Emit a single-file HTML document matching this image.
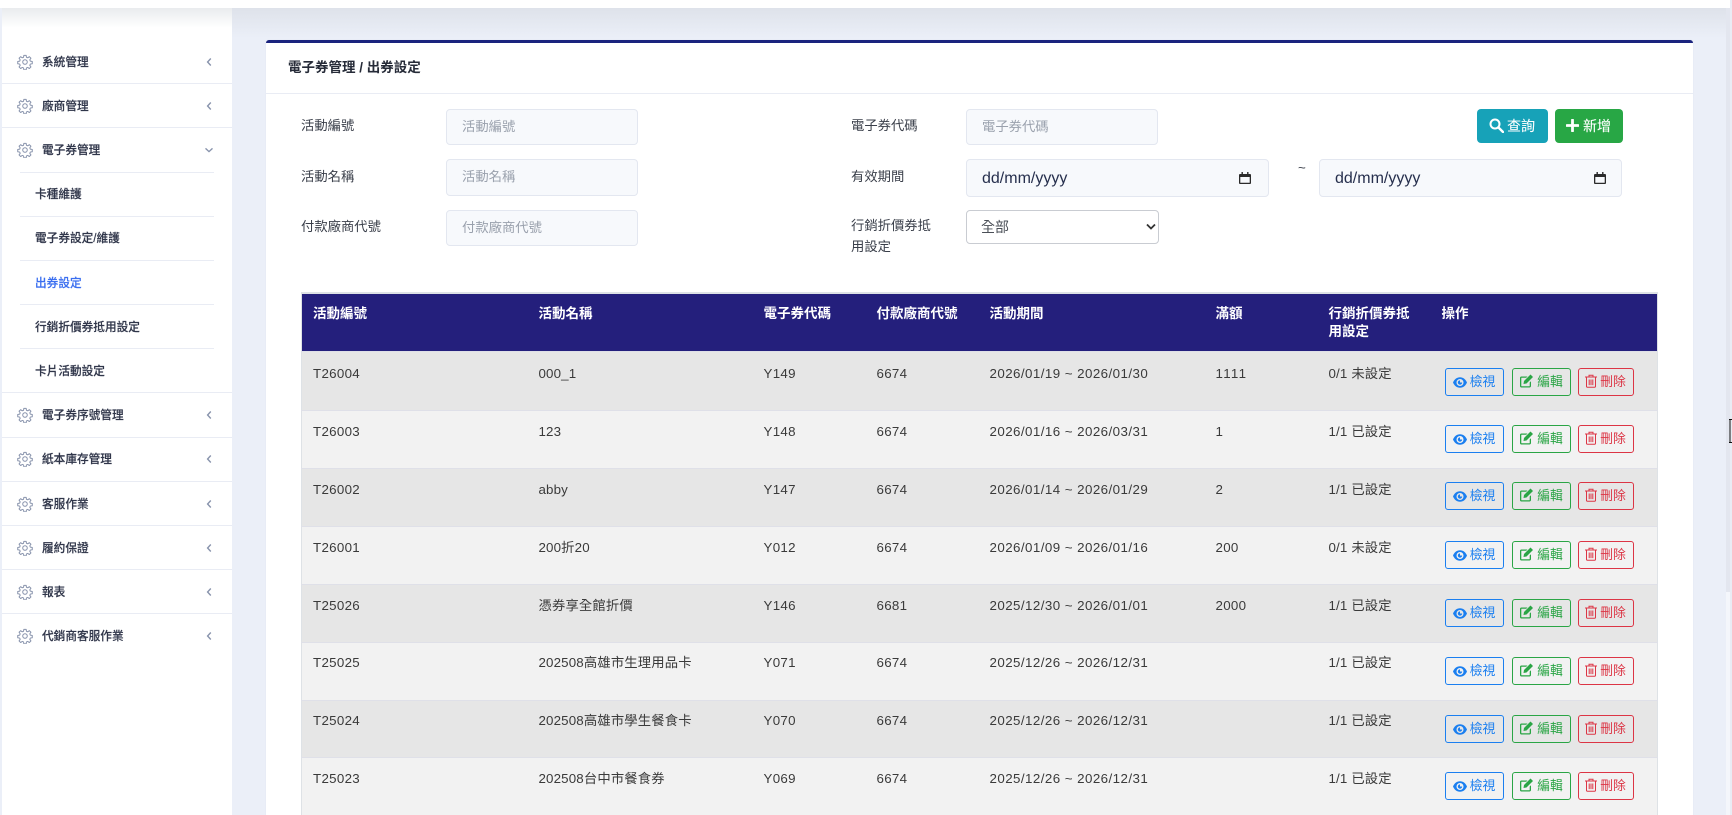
<!DOCTYPE html>
<html lang="zh-Hant"><head><meta charset="utf-8"><title>出券設定</title>
<style>
*{box-sizing:border-box}
html,body{margin:0;padding:0;width:1732px;height:815px;overflow:hidden;background:#ebeff8;font-family:"Liberation Sans","Noto Sans CJK TC",sans-serif;color:#212529}
.a{position:absolute;white-space:nowrap}
#hdr{position:absolute;left:0;top:0;width:1730px;height:8px;background:#fff;z-index:5}
#sh{position:absolute;left:232px;top:8px;width:1494px;height:30px;background:linear-gradient(#dee2ea,#ebeff8)}
#side{position:absolute;left:2px;top:0;width:230px;height:815px;background:#fff}
#sh2{position:absolute;left:2px;top:8px;width:230px;height:20px;background:linear-gradient(#e9ebee,#fff)}
.sep{position:absolute;height:1px;background:#e9ecf4}
.m{position:absolute;left:42px;margin-top:1px;font-size:11.67px;line-height:16px;font-weight:500;color:#30364a;white-space:nowrap;-webkit-text-stroke:.15px #30364a}
.s{position:absolute;left:35px;margin-top:1px;font-size:11.67px;line-height:16px;font-weight:500;color:#30364a;white-space:nowrap;-webkit-text-stroke:.15px #30364a}
.g{position:absolute;left:17px;width:16px;height:16px}
.c{position:absolute;left:204px;width:10px;height:10px}
#card{position:absolute;left:266px;top:40px;width:1427px;height:775px;background:#fff;border-top:3px solid #1a237e;border-radius:3px 3px 0 0;box-shadow:0 0 1px #d8dcea}
.t{position:absolute;font-size:13.33px;line-height:20px;color:#3a3f4a;white-space:nowrap}
.i{position:absolute;background:#f7f9fc;border:1px solid #e3e7f0;border-radius:4px;font-size:13.33px;line-height:34px;color:#9aa1ad;padding-left:15px;white-space:nowrap}
.btn{position:absolute;top:109px;height:34px;border-radius:4px;color:#fff;font-size:14px;line-height:35px;white-space:nowrap;-webkit-text-stroke:.1px #fff}
table{position:absolute;left:301px;top:292px;width:1357px;border-collapse:collapse;table-layout:fixed;font-size:13.33px;border-top:2px solid #dee2e6;border-left:1px solid #dee2e6;border-right:1px solid #dee2e6}
th{background:#241f7c;color:#fff;font-weight:700;font-size:13.5px;text-align:left;vertical-align:top;padding:11px 10px 0 11px;line-height:18px;height:58px}
th:last-child{padding-left:10px}
td{vertical-align:top;padding:10px 0 0 11px;line-height:20px;color:#3a3a3a;border-top:1px solid #dfe0e8;letter-spacing:.3px;font-kerning:none;white-space:nowrap}
tr.p td{padding-top:11px}
td:nth-child(2),td:nth-child(7){letter-spacing:.15px}
td:nth-child(5){letter-spacing:.44px}
tr.o td{background:#e6e6e6}
tr.e td{background:#f2f2f2}
td.op{padding-left:13px;letter-spacing:0}
.b{display:inline-block;height:28px;border:1px solid;border-radius:3px;font-size:12.8px;line-height:25px;vertical-align:top;white-space:nowrap;text-align:center}
.b svg{vertical-align:-2px;margin-right:3px}
.v{color:#1b7ff0;border-color:#1b7ff0;width:59px}
.d{color:#2aa545;border-color:#2aa545;width:59px;margin-left:8px}
.x{color:#dc3545;border-color:#dc3545;width:56px;margin-left:7px}
</style></head><body>
<svg width="0" height="0" style="position:absolute"><defs>
<symbol id="gear" viewBox="0 0 24 24"><g fill="none" stroke="#8893ac" stroke-width="1.5" stroke-linejoin="round"><circle cx="12" cy="12" r="3.4"/><path d="M10.3 2h3.4l.5 2.9 1.9.8 2.4-1.7 2.4 2.4-1.7 2.4.8 1.9 2.9.5v3.4l-2.9.5-.8 1.9 1.7 2.4-2.4 2.4-2.4-1.7-1.9.8-.5 2.9h-3.4l-.5-2.9-1.9-.8-2.4 1.7-2.4-2.4 1.7-2.4-.8-1.9-2.9-.5v-3.4l2.9-.5.8-1.9-1.7-2.4 2.4-2.4 2.4 1.7 1.9-.8z"/></g></symbol>
<symbol id="cl" viewBox="0 0 10 10"><path d="M6.8 1.5 3.6 5l3.2 3.5" fill="none" stroke="#8893ac" stroke-width="1.4"/></symbol>
<symbol id="cd" viewBox="0 0 10 10"><path d="M1.5 3.4 5 6.6l3.5-3.2" fill="none" stroke="#8893ac" stroke-width="1.4"/></symbol>
<symbol id="cal" viewBox="0 0 12 12"><path d="M1 2h10a1 1 0 0 1 1 1v8a1 1 0 0 1-1 1H1a1 1 0 0 1-1-1V3a1 1 0 0 1 1-1zM1.3 5v5.700h9.400V5z" fill="#2b2b2b" fill-rule="evenodd"/><path d="M2.500 0h1.400v3H2.500zM8.100 0h1.400v3H8.100z" fill="#2b2b2b"/></symbol>
<symbol id="eye" viewBox="0 0 16 12"><path d="M8 0C4.500 0 1.500 2.300 0 6c1.500 3.700 4.500 6 8 6s6.500-2.300 8-6c-1.500-3.700-4.500-6-8-6zm0 10a4 4 0 1 1 0-8 4 4 0 0 1 0 8z" fill="currentColor"/><path d="M8 3.500a2.500 2.500 0 1 0 2.500 2.500H8z" fill="currentColor"/></symbol>
<symbol id="edit" viewBox="0 0 14 14"><path d="M1.800 2.500h6.200L6.700 3.800H2.100a.3.3 0 0 0-.3.300v7.800c0 .2.100.3.300.3h7.800c.2 0 .3-.1.300-.3V8.500l1.300-1.300v4.800c0 .8-.7 1.500-1.500 1.500H1.800C1 13.500.5 12.800.5 12V4c0-.8.500-1.500 1.300-1.500z" fill="currentColor"/><path d="M11 .5l2.500 2.500-6.500 6.500-3 .5.500-3z" fill="currentColor"/></symbol>
<symbol id="tr" viewBox="0 0 12 14"><g fill="none" stroke="currentColor" stroke-width="1"><path d="M0 3h12M4 3V1.200h4V3M1.500 3v9.300c0 .5.400 1 1 1h7c.6 0 1-.5 1-1V3M4.200 5.500v5.600M6 5.500v5.600M7.800 5.500v5.600"/></g></symbol>
</defs></svg>

<div id="side"></div><div id="sh"></div><div id="sh2"></div><div id="hdr"></div>

<div class="sep" style="left:2px;top:83px;width:230px"></div>
<div class="sep" style="left:2px;top:127px;width:230px"></div>
<div class="sep" style="left:20px;top:172px;width:194px"></div>
<div class="sep" style="left:20px;top:216px;width:194px"></div>
<div class="sep" style="left:20px;top:260px;width:194px"></div>
<div class="sep" style="left:20px;top:304px;width:194px"></div>
<div class="sep" style="left:20px;top:348px;width:194px"></div>
<div class="sep" style="left:2px;top:392px;width:230px"></div>
<div class="sep" style="left:2px;top:437px;width:230px"></div>
<div class="sep" style="left:2px;top:481px;width:230px"></div>
<div class="sep" style="left:2px;top:525px;width:230px"></div>
<div class="sep" style="left:2px;top:569px;width:230px"></div>
<div class="sep" style="left:2px;top:613px;width:230px"></div>

<svg class="g" style="top:54px"><use href="#gear"/></svg><div class="m" style="top:54px">系統管理</div><svg class="c" style="top:57px"><use href="#cl"/></svg>
<svg class="g" style="top:98px"><use href="#gear"/></svg><div class="m" style="top:98px">廠商管理</div><svg class="c" style="top:101px"><use href="#cl"/></svg>
<svg class="g" style="top:142px"><use href="#gear"/></svg><div class="m" style="top:142px">電子券管理</div><svg class="c" style="top:145px"><use href="#cd"/></svg>
<div class="s" style="top:186px">卡種維護</div>
<div class="s" style="top:230px">電子券設定/維護</div>
<div class="s" style="top:275px;color:#3b6ff0;-webkit-text-stroke-color:#3b6ff0">出券設定</div>
<div class="s" style="top:319px">行銷折價券抵用設定</div>
<div class="s" style="top:363px">卡片活動設定</div>
<svg class="g" style="top:407px"><use href="#gear"/></svg><div class="m" style="top:407px">電子券序號管理</div><svg class="c" style="top:410px"><use href="#cl"/></svg>
<svg class="g" style="top:451px"><use href="#gear"/></svg><div class="m" style="top:451px">紙本庫存管理</div><svg class="c" style="top:454px"><use href="#cl"/></svg>
<svg class="g" style="top:496px"><use href="#gear"/></svg><div class="m" style="top:496px">客服作業</div><svg class="c" style="top:499px"><use href="#cl"/></svg>
<svg class="g" style="top:540px"><use href="#gear"/></svg><div class="m" style="top:540px">履約保證</div><svg class="c" style="top:543px"><use href="#cl"/></svg>
<svg class="g" style="top:584px"><use href="#gear"/></svg><div class="m" style="top:584px">報表</div><svg class="c" style="top:587px"><use href="#cl"/></svg>
<svg class="g" style="top:628px"><use href="#gear"/></svg><div class="m" style="top:628px">代銷商客服作業</div><svg class="c" style="top:631px"><use href="#cl"/></svg>

<div id="card"></div>
<div class="sep" style="left:266px;top:93px;width:1427px"></div>
<div class="a" style="left:288px;top:59px;font-size:13.5px;line-height:18px;font-weight:700;color:#262b38">電子券管理 / 出券設定</div>

<div class="t" style="left:301px;top:116px">活動編號</div>
<div class="t" style="left:301px;top:167px">活動名稱</div>
<div class="t" style="left:301px;top:217px">付款廠商代號</div>
<div class="i" style="left:446px;top:109px;width:192px;height:36px">活動編號</div>
<div class="i" style="left:446px;top:159px;width:192px;height:37px">活動名稱</div>
<div class="i" style="left:446px;top:210px;width:192px;height:36px">付款廠商代號</div>

<div class="t" style="left:851px;top:116px">電子券代碼</div>
<div class="t" style="left:851px;top:167px">有效期間</div>
<div class="t" style="left:851px;top:216px">行銷折價券抵</div>
<div class="t" style="left:851px;top:237px">用設定</div>
<div class="i" style="left:966px;top:109px;width:192px;height:36px">電子券代碼</div>
<div class="i" style="left:966px;top:159px;width:303px;height:38px;font-size:16px;color:#262f4d;line-height:37px">dd/mm/yyyy</div>
<svg class="a" style="left:1239px;top:172px" width="12" height="12"><use href="#cal"/></svg>
<div class="a" style="left:1298px;top:158px;font-size:13.33px;line-height:20px;color:#3a3f4a">~</div>
<div class="i" style="left:1319px;top:159px;width:303px;height:38px;font-size:16px;color:#262f4d;line-height:37px">dd/mm/yyyy</div>
<svg class="a" style="left:1594px;top:172px" width="12" height="12"><use href="#cal"/></svg>
<div class="a" style="left:966px;top:210px;width:193px;height:34px;background:#fff;border:1px solid #c9ccd2;border-radius:4px;font-size:14px;line-height:33px;color:#4a4f57;padding-left:14px">全部</div>
<svg class="a" style="left:1145px;top:222px" width="12" height="10" viewBox="0 0 12 10"><path d="M2 2.500 6 6.500l4-4" fill="none" stroke="#333" stroke-width="1.800"/></svg>

<div class="btn" style="left:1477px;width:71px;background:#17a2b8">
<svg class="a" style="left:12px;top:9px" width="15" height="15" viewBox="0 0 15 15"><circle cx="6" cy="6" r="4.500" fill="none" stroke="#fff" stroke-width="2"/><path d="M9.500 9.500 14 14" stroke="#fff" stroke-width="2.400" stroke-linecap="round"/></svg>
<span class="a" style="left:30px;top:0">查詢</span></div>
<div class="btn" style="left:1555px;width:68px;background:#28a745">
<svg class="a" style="left:11px;top:10px" width="13" height="13" viewBox="0 0 13 13"><path d="M6.500 1v11M1 6.500h11" stroke="#fff" stroke-width="2.800" stroke-linecap="round"/></svg>
<span class="a" style="left:28px;top:0">新增</span></div>

<table>
<colgroup><col style="width:226px"><col style="width:225px"><col style="width:113px"><col style="width:113px"><col style="width:226px"><col style="width:113px"><col style="width:114px"><col></colgroup>
<tr><th>活動編號</th><th>活動名稱</th><th>電子券代碼</th><th>付款廠商代號</th><th>活動期間</th><th>滿額</th><th>行銷折價券抵用設定</th><th>操作</th></tr>
<tr class="o" style="height:59px"><td style="padding-top:12px">T26004</td><td style="padding-top:12px">000_1</td><td style="padding-top:12px">Y149</td><td style="padding-top:12px">6674</td><td style="padding-top:12px">2026/01/19 ~ 2026/01/30</td><td style="padding-top:12px">1111</td><td style="padding-top:12px">0/1 未設定</td><td class="op" style="padding-top:16px"><span class="b v"><svg width="14" height="11"><use href="#eye"/></svg>檢視</span><span class="b d"><svg width="15" height="14"><use href="#edit"/></svg>編輯</span><span class="b x"><svg width="12" height="14"><use href="#tr"/></svg>刪除</span></td></tr>
<tr class="e p" style="height:58px"><td>T26003</td><td>123</td><td>Y148</td><td>6674</td><td>2026/01/16 ~ 2026/03/31</td><td>1</td><td>1/1 已設定</td><td class="op" style="padding-top:14px"><span class="b v"><svg width="14" height="11"><use href="#eye"/></svg>檢視</span><span class="b d"><svg width="15" height="14"><use href="#edit"/></svg>編輯</span><span class="b x"><svg width="12" height="14"><use href="#tr"/></svg>刪除</span></td></tr>
<tr class="o p" style="height:58px"><td>T26002</td><td>abby</td><td>Y147</td><td>6674</td><td>2026/01/14 ~ 2026/01/29</td><td>2</td><td>1/1 已設定</td><td class="op" style="padding-top:13px"><span class="b v"><svg width="14" height="11"><use href="#eye"/></svg>檢視</span><span class="b d"><svg width="15" height="14"><use href="#edit"/></svg>編輯</span><span class="b x"><svg width="12" height="14"><use href="#tr"/></svg>刪除</span></td></tr>
<tr class="e p" style="height:58px"><td>T26001</td><td>200折20</td><td>Y012</td><td>6674</td><td>2026/01/09 ~ 2026/01/16</td><td>200</td><td>0/1 未設定</td><td class="op" style="padding-top:14px"><span class="b v"><svg width="14" height="11"><use href="#eye"/></svg>檢視</span><span class="b d"><svg width="15" height="14"><use href="#edit"/></svg>編輯</span><span class="b x"><svg width="12" height="14"><use href="#tr"/></svg>刪除</span></td></tr>
<tr class="o p" style="height:58px"><td>T25026</td><td>憑券享全館折價</td><td>Y146</td><td>6681</td><td>2025/12/30 ~ 2026/01/01</td><td>2000</td><td>1/1 已設定</td><td class="op" style="padding-top:14px"><span class="b v"><svg width="14" height="11"><use href="#eye"/></svg>檢視</span><span class="b d"><svg width="15" height="14"><use href="#edit"/></svg>編輯</span><span class="b x"><svg width="12" height="14"><use href="#tr"/></svg>刪除</span></td></tr>
<tr class="e" style="height:58px"><td>T25025</td><td>202508高雄市生理用品卡</td><td>Y071</td><td>6674</td><td>2025/12/26 ~ 2026/12/31</td><td></td><td>1/1 已設定</td><td class="op" style="padding-top:14px"><span class="b v"><svg width="14" height="11"><use href="#eye"/></svg>檢視</span><span class="b d"><svg width="15" height="14"><use href="#edit"/></svg>編輯</span><span class="b x"><svg width="12" height="14"><use href="#tr"/></svg>刪除</span></td></tr>
<tr class="o" style="height:57px"><td>T25024</td><td>202508高雄市學生餐食卡</td><td>Y070</td><td>6674</td><td>2025/12/26 ~ 2026/12/31</td><td></td><td>1/1 已設定</td><td class="op" style="padding-top:14px"><span class="b v"><svg width="14" height="11"><use href="#eye"/></svg>檢視</span><span class="b d"><svg width="15" height="14"><use href="#edit"/></svg>編輯</span><span class="b x"><svg width="12" height="14"><use href="#tr"/></svg>刪除</span></td></tr>
<tr class="e p" style="height:58px"><td>T25023</td><td>202508台中市餐食券</td><td>Y069</td><td>6674</td><td>2025/12/26 ~ 2026/12/31</td><td></td><td>1/1 已設定</td><td class="op" style="padding-top:14px"><span class="b v"><svg width="14" height="11"><use href="#eye"/></svg>檢視</span><span class="b d"><svg width="15" height="14"><use href="#edit"/></svg>編輯</span><span class="b x"><svg width="12" height="14"><use href="#tr"/></svg>刪除</span></td></tr>
</table>

<div class="a" style="left:1726px;top:0;width:6px;height:592px;background:#e3e6ef"></div>
<div class="a" style="left:1726px;top:592px;width:4px;height:223px;background:#f4f6fb"></div>
<div class="a" style="left:1730px;top:0;width:2px;height:815px;background:#e9ecf4"></div>
<div class="a" style="left:1726px;top:0;width:4px;height:8px;background:#fff"></div>
<svg class="a" style="left:1729px;top:419px" width="3" height="24" viewBox="0 0 3 24"><path d="M0 .5h3M1 .5v23M0 23.500h3" fill="none" stroke="#111" stroke-width="1"/></svg>
</body></html>
